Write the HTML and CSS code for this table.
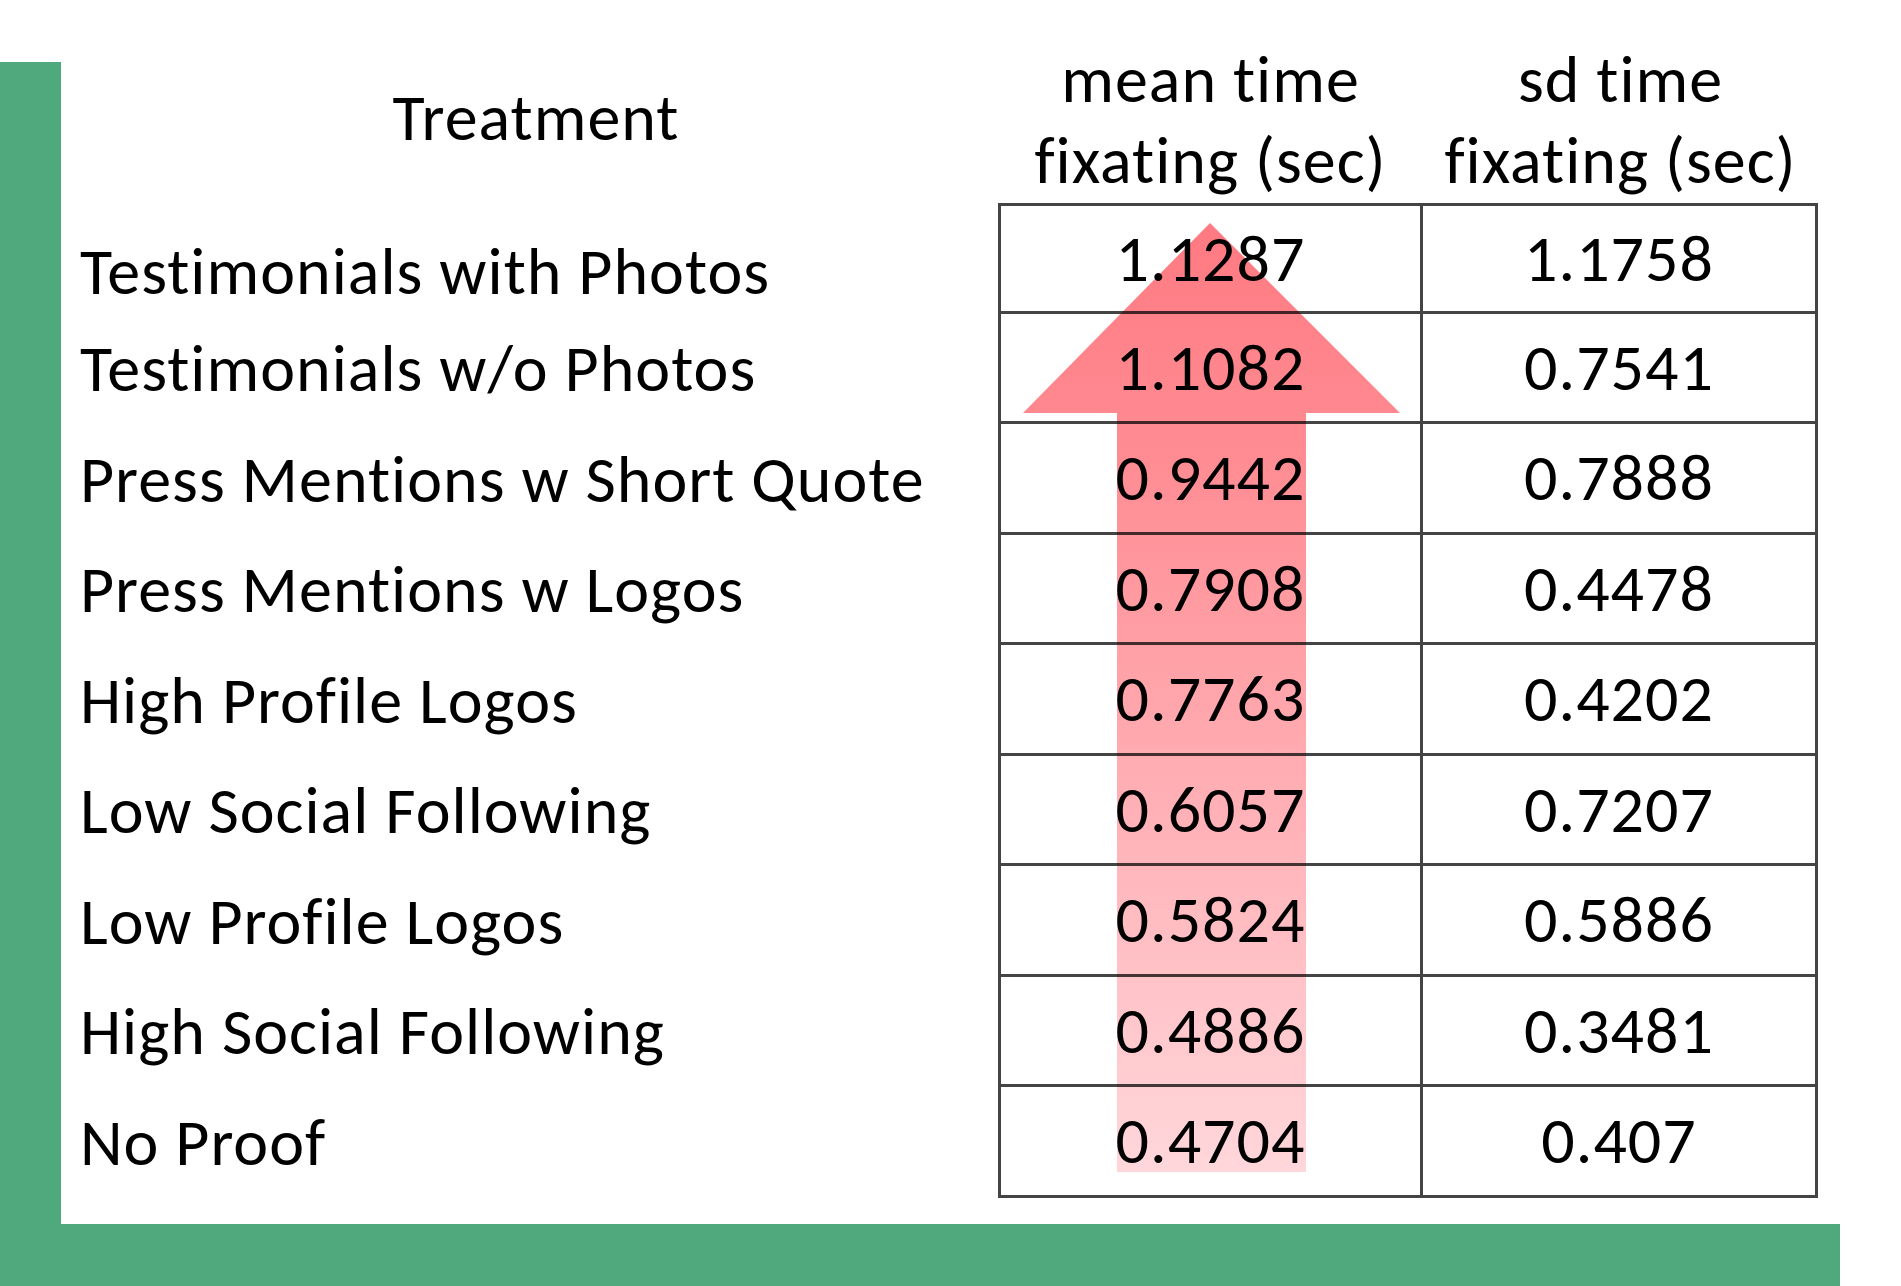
FILE: index.html
```html
<!DOCTYPE html>
<html lang="en">
<head>
<meta charset="utf-8">
<title>Time fixating by treatment</title>
<link rel="stylesheet" href="styles.css">
</head>
<body>
<div class="page">
  <div class="panel">
    <div class="sheet">
      <div class="labels">
        <div class="label-head">Treatment</div>
        <div class="label first">Testimonials with Photos</div>
        <div class="label">Testimonials w/o Photos</div>
        <div class="label">Press Mentions w Short Quote</div>
        <div class="label">Press Mentions w Logos</div>
        <div class="label">High Profile Logos</div>
        <div class="label">Low Social Following</div>
        <div class="label">Low Profile Logos</div>
        <div class="label">High Social Following</div>
        <div class="label">No Proof</div>
      </div>
      <div class="tbl">
        <div class="th">mean time<br>fixating (sec)</div>
        <div class="th">sd time<br>fixating (sec)</div>
        <div class="td c1 r1">1.1287</div><div class="td c2 r1">1.1758</div>
        <div class="td c1">1.1082</div><div class="td c2">0.7541</div>
        <div class="td c1">0.9442</div><div class="td c2">0.7888</div>
        <div class="td c1">0.7908</div><div class="td c2">0.4478</div>
        <div class="td c1">0.7763</div><div class="td c2">0.4202</div>
        <div class="td c1">0.6057</div><div class="td c2">0.7207</div>
        <div class="td c1">0.5824</div><div class="td c2">0.5886</div>
        <div class="td c1">0.4886</div><div class="td c2">0.3481</div>
        <div class="td c1">0.4704</div><div class="td c2">0.407</div>
        <svg class="arrow" width="425" height="1162" viewBox="0 0 425 1162" aria-hidden="true">
          <defs>
            <linearGradient id="ag" x1="0" y1="161" x2="0" y2="1110" gradientUnits="userSpaceOnUse">
              <stop offset="0" stop-color="#ff7a82"/>
              <stop offset="0.25" stop-color="#ff8c93"/>
              <stop offset="1" stop-color="#ffd7db"/>
            </linearGradient>
          </defs>
          <path d="M212 161 L402 351 L308 351 L308 1110 L119 1110 L119 351 L25 351 Z" fill="url(#ag)"/>
        </svg>
      </div>
    </div>
  </div>
</div>
</body>
</html>
```

FILE: styles.css
```css
html, body {
  margin: 0;
  padding: 0;
  background: #ffffff;
}

body {
  width: 1901px;
  height: 1286px;
  overflow: hidden;
  font-family: "Carlito", "Lato", "Liberation Sans", sans-serif;
  color: #000;
}

.page {
  padding-top: 62px;
}

.panel {
  width: 1840px;
  height: 1224px;
  box-sizing: border-box;
  background: #4fa97c;
  padding: 0 0 62px 61px;
}

.sheet {
  background: #ffffff;
  height: 100%;
  display: flex;
}

.labels {
  width: 937px;
  box-sizing: border-box;
  padding-left: 19px;
  display: grid;
  grid-template-rows: 141px repeat(9, 110.5px);
  font-size: 66px;
  letter-spacing: 1px;
}

.label-head {
  display: flex;
  align-items: center;
  justify-content: center;
  padding-right: 6px;
  padding-bottom: 31px;
}

.label {
  display: flex;
  align-items: center;
  white-space: nowrap;
}

.label.first {
  padding-top: 26px;
}

.tbl {
  position: relative;
  display: grid;
  grid-template-columns: 425px 395px;
  grid-template-rows: 141px repeat(9, 110.5px);
  font-size: 66px;
  letter-spacing: 1px;
}

.th {
  display: flex;
  align-items: flex-end;
  justify-content: center;
  text-align: center;
  line-height: 81px;
  padding-bottom: 2px;
  white-space: nowrap;
}

.td {
  display: flex;
  align-items: center;
  justify-content: center;
  box-sizing: border-box;
  border-right: 3px solid #444;
  border-bottom: 3px solid #444;
}

.td.c1 {
  border-left: 3px solid #444;
}

.td.r1 {
  border-top: 3px solid #444;
}

.arrow {
  position: absolute;
  left: 0;
  top: 0;
  mix-blend-mode: multiply;
  pointer-events: none;
}
```
